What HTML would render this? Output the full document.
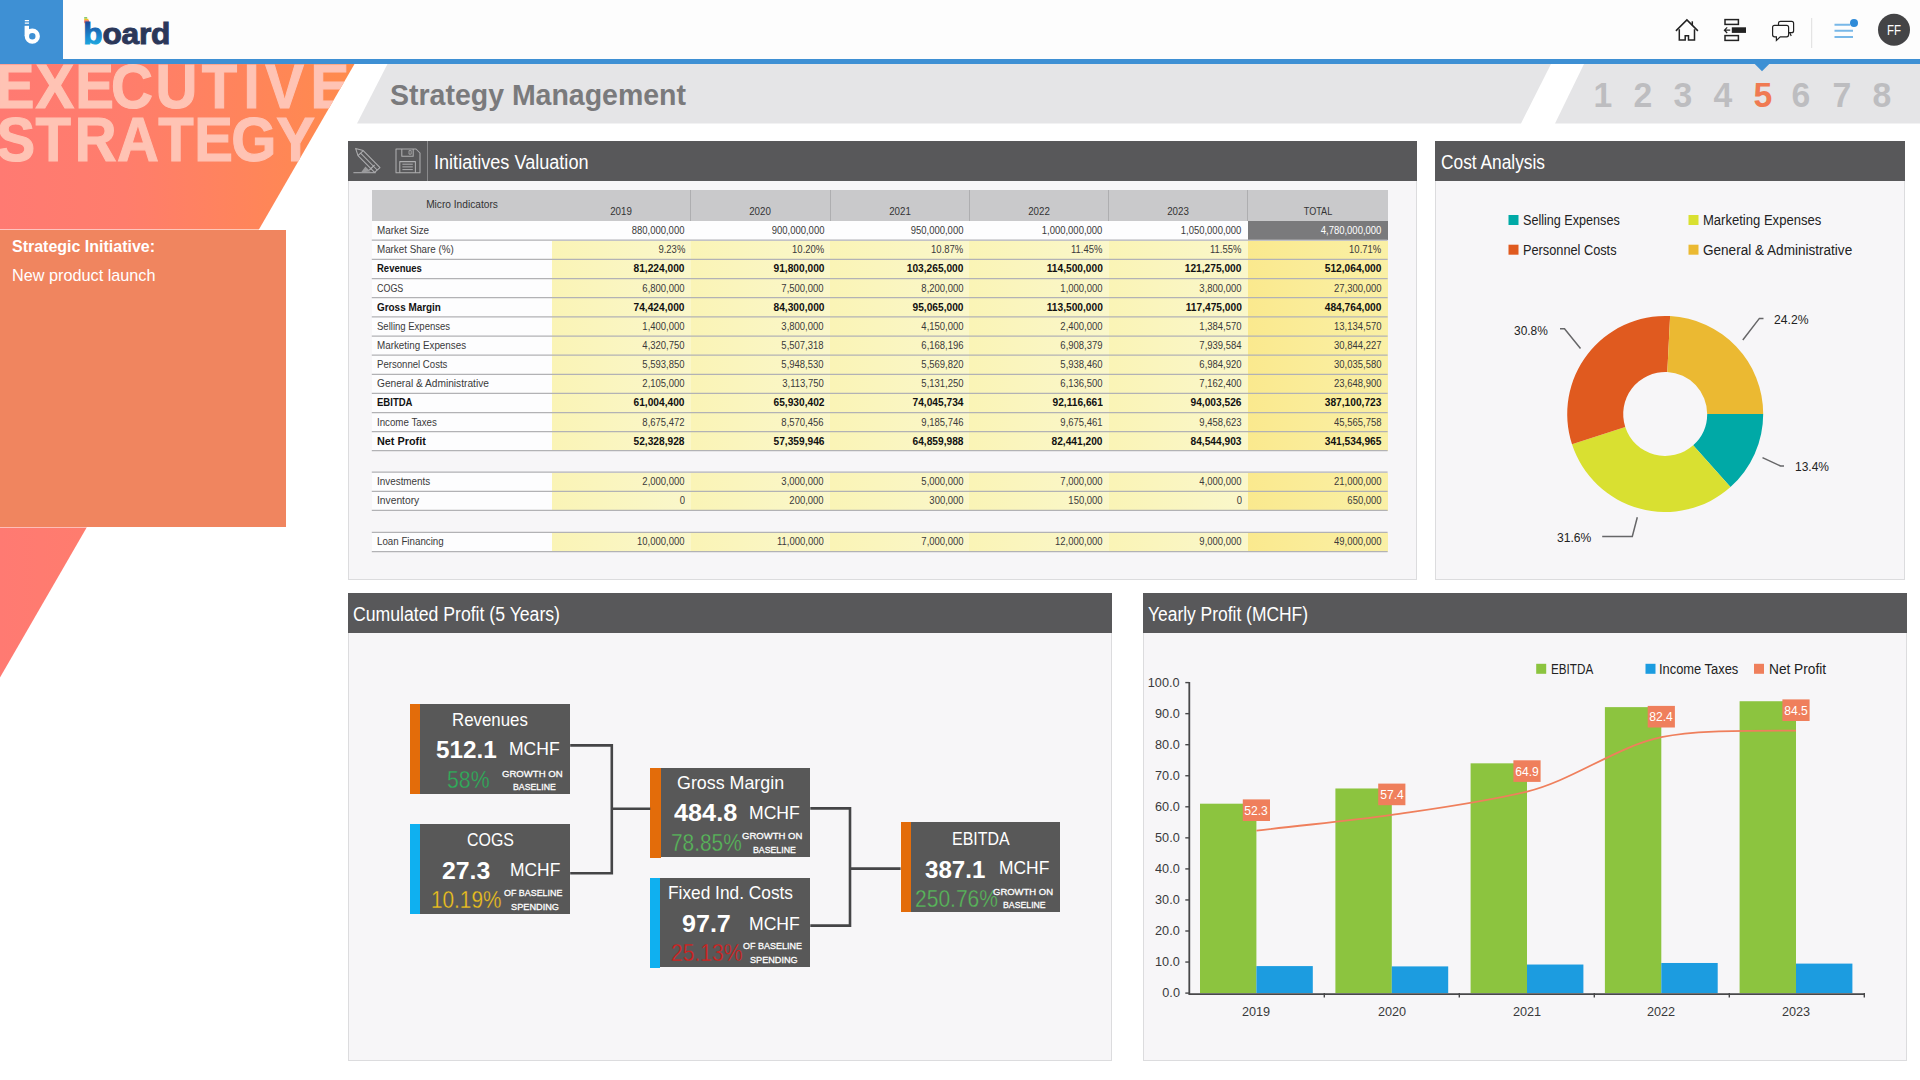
<!DOCTYPE html>
<html lang="en"><head><meta charset="utf-8"><title>Board - Strategy Management</title>
<style>
html,body{margin:0;padding:0;}
body{width:1920px;height:1080px;overflow:hidden;background:#fff;font-family:"Liberation Sans", sans-serif;position:relative;}
.t{position:absolute;white-space:nowrap;line-height:1;display:block;}
svg{position:absolute;left:0;top:0;overflow:visible;}
svg text{font-family:"Liberation Sans", sans-serif;}
</style></head><body>
<svg width="1920" height="1080" viewBox="0 0 1920 1080">
<defs>
<linearGradient id="sg" x1="0" y1="0" x2="354" y2="0" gradientUnits="userSpaceOnUse">
<stop offset="0" stop-color="#ff7a72"/><stop offset="0.35" stop-color="#ff7d6c"/><stop offset="1" stop-color="#ff8b4c"/></linearGradient>
</defs>
<polygon points="0,60 354.5,60 354.5,64 0,677.5" fill="url(#sg)"/>
<polygon points="387.5,64 1551,64 1521,123.5 357,123.5" fill="#e5e5e7"/>
<polygon points="1584,64 1920,64 1920,123.5 1555,123.5" fill="#e5e5e7"/>
</svg>
<svg width="1920" height="1080" viewBox="0 0 1920 1080"><defs><clipPath id="sgc"><polygon points="0,60 354.5,60 354.5,64 0,677.5"/></clipPath></defs><g clip-path="url(#sgc)"><text transform="scale(0.92 1)" x="-4.69 38.47 81.88 120.75 169.04 219.41 264.82 288.36 337.48" y="107.85" font-size="63.1" font-weight="700" fill="#ffc3b4" stroke="#ffc3b4" stroke-width="1.1">EXECUTIVE</text>
<text transform="scale(0.92 1)" x="-3.71 38.54 81.19 127.26 172.13 211.07 251.28 300.18" y="160.85" font-size="63.1" font-weight="700" fill="#ffc3b4" stroke="#ffc3b4" stroke-width="1.1">STRATEGY</text></g></svg>
<div style="position:absolute;left:0px;top:229px;width:285.5px;height:1.2px;background:rgba(255,255,255,.55);"></div>
<div style="position:absolute;left:0px;top:230.2px;width:285.5px;height:297px;background:#f0855f;"></div>
<div style="position:absolute;left:0px;top:527.2px;width:285.5px;height:1.2px;background:rgba(255,255,255,.5);"></div>
<div style="position:absolute;left:0px;top:0px;width:1920px;height:59.5px;background:#fdfdfd;"></div>
<div style="position:absolute;left:0px;top:0px;width:62.5px;height:59.5px;background:#3e90d4;"></div>
<div style="position:absolute;left:0px;top:59px;width:1920px;height:5px;background:#3e90d4;"></div>
<svg width="1920" height="1080" viewBox="0 0 1920 1080">
<g fill="none" stroke="#fff">
<circle cx="32.3" cy="36.2" r="5.4" stroke-width="4.4"/>
<path d="M26.8 25.8V36" stroke-width="4.4"/>
<path d="M24.8 20.6h4.2M24.8 23.2h4.2" stroke-width="1.3"/>
</g>
<rect x="84.2" y="17.2" width="3" height="1.4" fill="#6cbf4b"/>
<rect x="84.2" y="18.8" width="4.2" height="1.4" fill="#f4c020"/>
<rect x="84.2" y="20.4" width="4.8" height="1.4" fill="#e8452c"/>
<rect x="84.2" y="22" width="4.8" height="1.2" fill="#f08a24"/>
<g fill="none" stroke="#222" stroke-width="1.5" stroke-linejoin="miter">
<path d="M1675.9 30.9L1686.9 19.9L1697.9 30.9"/>
<path d="M1679.3 29.2V40H1685.2V35.8H1688.5V40H1694.5V29.2"/>
<path d="M1692.3 21.3V25.2"/>
<rect x="1725" y="19.6" width="13.4" height="4.8"/>
<rect x="1725" y="35.6" width="13.4" height="4.8"/>
<path d="M1730.2 30.2H1724.6M1727.2 27.4L1724.4 30.2L1727.2 33" stroke-width="1.2"/>
<path d="M1778.5 25.2V23.3a2 2 0 0 1 2 -2H1791.6a2 2 0 0 1 2 2V30.7a2 2 0 0 1 -2 2H1789" stroke-width="1.2"/>
<path d="M1789.8 32.7l1.4 3.2" stroke-width="1.2"/>
<path d="M1774.6 25.3H1786.6a2 2 0 0 1 2 2V34.8a2 2 0 0 1 -2 2H1780.3L1776.4 40.4V36.8H1774.6a2 2 0 0 1 -2 -2V27.3a2 2 0 0 1 2 -2z" stroke-width="1.2"/>
</g>
<rect x="1731.8" y="27.3" width="14.2" height="5.6" fill="#222"/>
<rect x="1811.2" y="18" width="1" height="30" fill="#dedede"/>
<g stroke="#78b8e8" stroke-width="1.9"><path d="M1834.5 24.7H1850M1834.5 30.8H1853M1834.5 37H1853"/></g>
<circle cx="1854" cy="23" r="4" fill="#2f8bd8"/>
<circle cx="1894" cy="29.7" r="16" fill="#444446"/>
<polygon points="1754.5,63.8 1769.5,63.8 1762,71.2" fill="#3e90d4"/>
</svg>
<svg width="1920" height="1080" viewBox="0 0 1920 1080"><defs>
<linearGradient id="bgr" x1="0" y1="0" x2="0" y2="1"><stop offset="0.3" stop-color="#1d4f9e"/><stop offset="0.62" stop-color="#1b8fd4"/><stop offset="0.92" stop-color="#21bfe6"/></linearGradient>
<pattern id="bp" x="70" y="10" width="120" height="45" patternUnits="userSpaceOnUse"><rect x="0" y="0" width="25.6" height="45" fill="url(#bgr)"/><rect x="25.6" y="0" width="95" height="45" fill="#2b3759"/></pattern></defs>
<text transform="scale(1.07 1)" x="77.9" y="44.5" font-size="29.6" font-weight="700" letter-spacing="-0.2" fill="url(#bp)" stroke="url(#bp)" stroke-width="0.9">board</text></svg>
<div style="position:absolute;left:347.5px;top:180.5px;width:1069px;height:399.0px;background:#f7f6f8;box-sizing:border-box;border:1px solid #dcdcde;border-top:none;"></div>
<div style="position:absolute;left:347.5px;top:141px;width:1069px;height:39.5px;background:#58585a;"></div>
<div style="position:absolute;left:1435px;top:180.5px;width:470px;height:399.0px;background:#f7f6f8;box-sizing:border-box;border:1px solid #dcdcde;border-top:none;"></div>
<div style="position:absolute;left:1435px;top:141px;width:470px;height:39.5px;background:#58585a;"></div>
<div style="position:absolute;left:347.5px;top:632.5px;width:764.5px;height:428.0px;background:#f7f6f8;box-sizing:border-box;border:1px solid #dcdcde;border-top:none;"></div>
<div style="position:absolute;left:347.5px;top:593px;width:764.5px;height:39.5px;background:#58585a;"></div>
<div style="position:absolute;left:1142.5px;top:632.5px;width:764.5px;height:428.0px;background:#f7f6f8;box-sizing:border-box;border:1px solid #dcdcde;border-top:none;"></div>
<div style="position:absolute;left:1142.5px;top:593px;width:764.5px;height:39.5px;background:#58585a;"></div>
<div style="position:absolute;left:427.3px;top:141px;width:1px;height:39.5px;background:#8a8a8c;"></div>
<svg width="1920" height="1080" viewBox="0 0 1920 1080"><g fill="none" stroke="#aeaeb0" stroke-width="1.05" stroke-linejoin="round">
<path d="M355.6 148.4L363.2 150.6L380 167.6L374.6 172.4L358 155.6Z"/>
<path d="M358 155.6L363.2 150.6M360.6 153.2L377.2 170M374.6 165L369.4 170"/>
<path d="M353.4 172.7H375.8"/>
<path d="M361 172.4L365.4 166.4L370.6 171.6Z" fill="#9a9a9c" stroke="none"/>
<path d="M396 149H416L420 153V172.8H396Z"/>
<path d="M401.8 149V156.2H413.2V149"/>
<path d="M399.8 172.8V161.6H415.4V172.8"/>
<path d="M402.4 164.2H412.8M402.4 166.9H412.8M402.4 169.6H412.8" stroke-width="1"/>
<rect x="409" y="150.6" width="2.2" height="3.6" stroke-width="0.8"/>
</g></svg>
<div style="position:absolute;left:371.8px;top:190px;width:1015.8px;height:31.4px;background:#c9c9cb;"></div>
<div style="position:absolute;left:690.3px;top:190px;width:1px;height:31.4px;background:#aeaeb0;"></div>
<div style="position:absolute;left:829.5px;top:190px;width:1px;height:31.4px;background:#aeaeb0;"></div>
<div style="position:absolute;left:968.8px;top:190px;width:1px;height:31.4px;background:#aeaeb0;"></div>
<div style="position:absolute;left:1108.0px;top:190px;width:1px;height:31.4px;background:#aeaeb0;"></div>
<div style="position:absolute;left:1247.3px;top:190px;width:1px;height:31.4px;background:#aeaeb0;"></div>
<div style="position:absolute;left:371.8px;top:221.4px;width:180.2px;height:19.099999999999994px;background:#fdfdfe;"></div>
<div style="position:absolute;left:552px;top:221.4px;width:695.8px;height:19.099999999999994px;background:#fdfdfe;"></div>
<div style="position:absolute;left:1247.8px;top:221.4px;width:139.79999999999995px;height:19.099999999999994px;background:#7a7a7c;"></div>
<div style="position:absolute;left:371.8px;top:240.5px;width:180.2px;height:19.19999999999999px;background:#fdfdfe;"></div>
<div style="position:absolute;left:552px;top:240.5px;width:695.8px;height:19.19999999999999px;background:repeating-linear-gradient(90deg,#faf4b6 0,#faf7cb 139.16px);"></div>
<div style="position:absolute;left:1247.8px;top:240.5px;width:139.79999999999995px;height:19.19999999999999px;background:linear-gradient(90deg,#fae98e,#faf0a6);"></div>
<div style="position:absolute;left:371.8px;top:259.7px;width:180.2px;height:19.100000000000023px;background:#fdfdfe;"></div>
<div style="position:absolute;left:552px;top:259.7px;width:695.8px;height:19.100000000000023px;background:repeating-linear-gradient(90deg,#faf4b6 0,#faf7cb 139.16px);"></div>
<div style="position:absolute;left:1247.8px;top:259.7px;width:139.79999999999995px;height:19.100000000000023px;background:linear-gradient(90deg,#fae98e,#faf0a6);"></div>
<div style="position:absolute;left:371.8px;top:278.8px;width:180.2px;height:19.19999999999999px;background:#fdfdfe;"></div>
<div style="position:absolute;left:552px;top:278.8px;width:695.8px;height:19.19999999999999px;background:repeating-linear-gradient(90deg,#faf4b6 0,#faf7cb 139.16px);"></div>
<div style="position:absolute;left:1247.8px;top:278.8px;width:139.79999999999995px;height:19.19999999999999px;background:linear-gradient(90deg,#fae98e,#faf0a6);"></div>
<div style="position:absolute;left:371.8px;top:298.0px;width:180.2px;height:19.100000000000023px;background:#fdfdfe;"></div>
<div style="position:absolute;left:552px;top:298.0px;width:695.8px;height:19.100000000000023px;background:repeating-linear-gradient(90deg,#faf4b6 0,#faf7cb 139.16px);"></div>
<div style="position:absolute;left:1247.8px;top:298.0px;width:139.79999999999995px;height:19.100000000000023px;background:linear-gradient(90deg,#fae98e,#faf0a6);"></div>
<div style="position:absolute;left:371.8px;top:317.1px;width:180.2px;height:19.19999999999999px;background:#fdfdfe;"></div>
<div style="position:absolute;left:552px;top:317.1px;width:695.8px;height:19.19999999999999px;background:repeating-linear-gradient(90deg,#faf4b6 0,#faf7cb 139.16px);"></div>
<div style="position:absolute;left:1247.8px;top:317.1px;width:139.79999999999995px;height:19.19999999999999px;background:linear-gradient(90deg,#fae98e,#faf0a6);"></div>
<div style="position:absolute;left:371.8px;top:336.3px;width:180.2px;height:19.099999999999966px;background:#fdfdfe;"></div>
<div style="position:absolute;left:552px;top:336.3px;width:695.8px;height:19.099999999999966px;background:repeating-linear-gradient(90deg,#faf4b6 0,#faf7cb 139.16px);"></div>
<div style="position:absolute;left:1247.8px;top:336.3px;width:139.79999999999995px;height:19.099999999999966px;background:linear-gradient(90deg,#fae98e,#faf0a6);"></div>
<div style="position:absolute;left:371.8px;top:355.4px;width:180.2px;height:19.200000000000045px;background:#fdfdfe;"></div>
<div style="position:absolute;left:552px;top:355.4px;width:695.8px;height:19.200000000000045px;background:repeating-linear-gradient(90deg,#faf4b6 0,#faf7cb 139.16px);"></div>
<div style="position:absolute;left:1247.8px;top:355.4px;width:139.79999999999995px;height:19.200000000000045px;background:linear-gradient(90deg,#fae98e,#faf0a6);"></div>
<div style="position:absolute;left:371.8px;top:374.6px;width:180.2px;height:19.099999999999966px;background:#fdfdfe;"></div>
<div style="position:absolute;left:552px;top:374.6px;width:695.8px;height:19.099999999999966px;background:repeating-linear-gradient(90deg,#faf4b6 0,#faf7cb 139.16px);"></div>
<div style="position:absolute;left:1247.8px;top:374.6px;width:139.79999999999995px;height:19.099999999999966px;background:linear-gradient(90deg,#fae98e,#faf0a6);"></div>
<div style="position:absolute;left:371.8px;top:393.7px;width:180.2px;height:19.19999999999999px;background:#fdfdfe;"></div>
<div style="position:absolute;left:552px;top:393.7px;width:695.8px;height:19.19999999999999px;background:repeating-linear-gradient(90deg,#faf4b6 0,#faf7cb 139.16px);"></div>
<div style="position:absolute;left:1247.8px;top:393.7px;width:139.79999999999995px;height:19.19999999999999px;background:linear-gradient(90deg,#fae98e,#faf0a6);"></div>
<div style="position:absolute;left:371.8px;top:412.9px;width:180.2px;height:19.100000000000023px;background:#fdfdfe;"></div>
<div style="position:absolute;left:552px;top:412.9px;width:695.8px;height:19.100000000000023px;background:repeating-linear-gradient(90deg,#faf4b6 0,#faf7cb 139.16px);"></div>
<div style="position:absolute;left:1247.8px;top:412.9px;width:139.79999999999995px;height:19.100000000000023px;background:linear-gradient(90deg,#fae98e,#faf0a6);"></div>
<div style="position:absolute;left:371.8px;top:432.0px;width:180.2px;height:18.80000000000001px;background:#fdfdfe;"></div>
<div style="position:absolute;left:552px;top:432.0px;width:695.8px;height:18.80000000000001px;background:repeating-linear-gradient(90deg,#faf4b6 0,#faf7cb 139.16px);"></div>
<div style="position:absolute;left:1247.8px;top:432.0px;width:139.79999999999995px;height:18.80000000000001px;background:linear-gradient(90deg,#fae98e,#faf0a6);"></div>
<div style="position:absolute;left:371.8px;top:472.5px;width:180.2px;height:19.100000000000023px;background:#fdfdfe;"></div>
<div style="position:absolute;left:552px;top:472.5px;width:695.8px;height:19.100000000000023px;background:repeating-linear-gradient(90deg,#faf4b6 0,#faf7cb 139.16px);"></div>
<div style="position:absolute;left:1247.8px;top:472.5px;width:139.79999999999995px;height:19.100000000000023px;background:linear-gradient(90deg,#fae98e,#faf0a6);"></div>
<div style="position:absolute;left:371.8px;top:491.6px;width:180.2px;height:19.099999999999966px;background:#fdfdfe;"></div>
<div style="position:absolute;left:552px;top:491.6px;width:695.8px;height:19.099999999999966px;background:repeating-linear-gradient(90deg,#faf4b6 0,#faf7cb 139.16px);"></div>
<div style="position:absolute;left:1247.8px;top:491.6px;width:139.79999999999995px;height:19.099999999999966px;background:linear-gradient(90deg,#fae98e,#faf0a6);"></div>
<div style="position:absolute;left:371.8px;top:532.6px;width:180.2px;height:19.399999999999977px;background:#fdfdfe;"></div>
<div style="position:absolute;left:552px;top:532.6px;width:695.8px;height:19.399999999999977px;background:repeating-linear-gradient(90deg,#faf4b6 0,#faf7cb 139.16px);"></div>
<div style="position:absolute;left:1247.8px;top:532.6px;width:139.79999999999995px;height:19.399999999999977px;background:linear-gradient(90deg,#fae98e,#faf0a6);"></div>
<svg width="1920" height="1080" viewBox="0 0 1920 1080"><path d="M371.8 240.20H1387.6M371.8 259.40H1387.6M371.8 278.50H1387.6M371.8 297.70H1387.6M371.8 316.80H1387.6M371.8 336.00H1387.6M371.8 355.10H1387.6M371.8 374.30H1387.6M371.8 393.40H1387.6M371.8 412.60H1387.6M371.8 431.70H1387.6M371.8 450.50H1387.6M371.8 472.20H1387.6M371.8 491.30H1387.6M371.8 510.40H1387.6M371.8 532.30H1387.6M371.8 551.70H1387.6" stroke="#b2b2b5" stroke-width="1.25" fill="none"/></svg>
<svg width="1920" height="1080" viewBox="0 0 1920 1080"><path d="M1763.20 414.00A98 98 0 0 1 1730.47 487.10L1693.17 445.33A42 42 0 0 0 1707.20 414.00Z" fill="#00a9a6"/><path d="M1730.47 487.10A98 98 0 0 1 1572.00 444.28L1625.26 426.98A42 42 0 0 0 1693.17 445.33Z" fill="#d9e031"/><path d="M1572.00 444.28A98 98 0 0 1 1670.12 316.12L1667.31 372.05A42 42 0 0 0 1625.26 426.98Z" fill="#e05a1f"/><path d="M1670.12 316.12A98 98 0 0 1 1763.20 414.00L1707.20 414.00A42 42 0 0 0 1667.31 372.05Z" fill="#ebb932"/><g fill="none" stroke="#666668" stroke-width="1.5"><path d="M1742.8 340L1759.4 318.4H1763.5"/><path d="M1580.5 348.5L1564.5 328.8H1560"/><path d="M1762.5 457.6L1780.5 466H1784"/><path d="M1637.3 517.3L1632.3 536.4H1602.2"/></g><rect x="1508.5" y="215" width="10" height="10" fill="#00a9a6"/><rect x="1688.5" y="215" width="10" height="10" fill="#d9e031"/><rect x="1508.5" y="244.7" width="10" height="10" fill="#e05a1f"/><rect x="1688.5" y="244.7" width="10" height="10" fill="#ebb932"/></svg>
<div style="position:absolute;left:410.3px;top:704.2px;width:159.7px;height:89.5px;background:#585858;"></div>
<div style="position:absolute;left:410.3px;top:704.2px;width:10.2px;height:90.3px;background:#e36c0a;"></div>
<div style="position:absolute;left:410.2px;top:824px;width:159.7px;height:89.5px;background:#585858;"></div>
<div style="position:absolute;left:410.2px;top:824px;width:10.2px;height:90.3px;background:#0fb0f0;"></div>
<div style="position:absolute;left:650.4px;top:767.6px;width:159.7px;height:89.5px;background:#585858;"></div>
<div style="position:absolute;left:650.4px;top:767.6px;width:10.2px;height:90.3px;background:#e36c0a;"></div>
<div style="position:absolute;left:650.3px;top:877.6px;width:159.7px;height:89.5px;background:#585858;"></div>
<div style="position:absolute;left:650.3px;top:877.6px;width:10.2px;height:90.3px;background:#0fb0f0;"></div>
<div style="position:absolute;left:900.7px;top:822px;width:159.7px;height:89.5px;background:#585858;"></div>
<div style="position:absolute;left:900.7px;top:822px;width:10.2px;height:90.3px;background:#e36c0a;"></div>
<svg width="1920" height="1080" viewBox="0 0 1920 1080"><g fill="none" stroke="#454547" stroke-width="2.6">
<path d="M570.2 745.4H611.8V873.2H570.2M611.8 808.7H650.3"/>
<path d="M810.3 808.4H850V925.6H810.3M850 868.6H900.6"/>
</g></svg>
<svg width="1920" height="1080" viewBox="0 0 1920 1080"><rect x="1200.0" y="803.70" width="56.4" height="189.41" fill="#8cc43f"/><rect x="1256.4" y="966.09" width="56.4" height="27.01" fill="#1c9ce0"/><rect x="1335.4" y="788.48" width="56.4" height="204.62" fill="#8cc43f"/><rect x="1391.8" y="966.40" width="56.4" height="26.70" fill="#1c9ce0"/><rect x="1470.6" y="763.33" width="56.4" height="229.77" fill="#8cc43f"/><rect x="1527.0" y="964.53" width="56.4" height="28.57" fill="#1c9ce0"/><rect x="1604.9" y="707.13" width="56.4" height="285.97" fill="#8cc43f"/><rect x="1661.3" y="962.98" width="56.4" height="30.12" fill="#1c9ce0"/><rect x="1739.6" y="701.23" width="56.4" height="291.87" fill="#8cc43f"/><rect x="1796.0" y="963.60" width="56.4" height="29.50" fill="#1c9ce0"/><g stroke="#48484a" stroke-width="1.8" fill="none"><path d="M1189.3 682.1V994.1H1864.8"/><path d="M1185.3 993.10H1189.3" stroke-width="1.4"/><path d="M1185.3 962.05H1189.3" stroke-width="1.4"/><path d="M1185.3 931.00H1189.3" stroke-width="1.4"/><path d="M1185.3 899.95H1189.3" stroke-width="1.4"/><path d="M1185.3 868.90H1189.3" stroke-width="1.4"/><path d="M1185.3 837.85H1189.3" stroke-width="1.4"/><path d="M1185.3 806.80H1189.3" stroke-width="1.4"/><path d="M1185.3 775.75H1189.3" stroke-width="1.4"/><path d="M1185.3 744.70H1189.3" stroke-width="1.4"/><path d="M1185.3 713.65H1189.3" stroke-width="1.4"/><path d="M1185.3 682.60H1189.3" stroke-width="1.4"/><path d="M1324.3 993.1V997.6" stroke-width="1.4"/><path d="M1459.3 993.1V997.6" stroke-width="1.4"/><path d="M1594.3 993.1V997.6" stroke-width="1.4"/><path d="M1729.3 993.1V997.6" stroke-width="1.4"/><path d="M1864.3 993.1V997.6" stroke-width="1.4"/></g><path d="M1256.4 830.7C1301.4 825.1 1346.8 821.4 1391.8 814.9C1436.8 808.3 1482.0 802.4 1527.0 791.6C1572.0 780.8 1616.3 746.7 1661.3 737.2C1691.3 730.9 1726.0 730.7 1796.0 730.7" fill="none" stroke="#ef7f5c" stroke-width="1.8"/><rect x="1242.8" y="799.4" width="27.2" height="21.6" fill="#ef7f5c"/><rect x="1378.2" y="783.6" width="27.2" height="21.6" fill="#ef7f5c"/><rect x="1513.4" y="760.3" width="27.2" height="21.6" fill="#ef7f5c"/><rect x="1647.7" y="705.9" width="27.2" height="21.6" fill="#ef7f5c"/><rect x="1782.4" y="699.4" width="27.2" height="21.6" fill="#ef7f5c"/><rect x="1536.2" y="663.8" width="10" height="10" fill="#8cc43f"/><rect x="1645.5" y="663.8" width="10" height="10" fill="#1c9ce0"/><rect x="1754" y="663.8" width="10" height="10" fill="#ef7f5c"/></svg>
<span class="t " id="t0" style="top:237.86px;font-size:16.4px;color:#fff;font-weight:700;left:11.6px;transform-origin:0 0;transform:scaleX(0.9751);">Strategic Initiative:</span>
<span class="t " id="t1" style="top:266.76px;font-size:16.4px;color:#fff;left:11.6px;transform-origin:0 0;transform:scaleX(0.9905);">New product launch</span>
<span class="t " id="t2" style="top:22.12px;font-size:15.5px;color:#fff;left:1894px;transform-origin:50% 0;transform:translateX(-50%) scaleX(0.7393);">FF</span>
<span class="t " id="t3" style="top:79.84px;font-size:29.6px;color:#7a7a7c;font-weight:700;left:389.5px;transform-origin:0 0;transform:scaleX(0.9625);">Strategy Management</span>
<span class="t " id="t4" style="top:78.03px;font-size:35.5px;color:#bdbdc0;font-weight:700;left:1603px;transform-origin:50% 0;transform:translateX(-50%) scaleX(0.9500);">1</span>
<span class="t " id="t5" style="top:78.03px;font-size:35.5px;color:#bdbdc0;font-weight:700;left:1643.4px;transform-origin:50% 0;transform:translateX(-50%) scaleX(0.9500);">2</span>
<span class="t " id="t6" style="top:78.03px;font-size:35.5px;color:#bdbdc0;font-weight:700;left:1682.5px;transform-origin:50% 0;transform:translateX(-50%) scaleX(0.9500);">3</span>
<span class="t " id="t7" style="top:78.03px;font-size:35.5px;color:#bdbdc0;font-weight:700;left:1723px;transform-origin:50% 0;transform:translateX(-50%) scaleX(0.9500);">4</span>
<span class="t " id="t8" style="top:78.03px;font-size:35.5px;color:#f07a52;font-weight:700;left:1762.5px;transform-origin:50% 0;transform:translateX(-50%) scaleX(0.9500);">5</span>
<span class="t " id="t9" style="top:78.03px;font-size:35.5px;color:#bdbdc0;font-weight:700;left:1801px;transform-origin:50% 0;transform:translateX(-50%) scaleX(0.9500);">6</span>
<span class="t " id="t10" style="top:78.03px;font-size:35.5px;color:#bdbdc0;font-weight:700;left:1841.5px;transform-origin:50% 0;transform:translateX(-50%) scaleX(0.9500);">7</span>
<span class="t " id="t11" style="top:78.03px;font-size:35.5px;color:#bdbdc0;font-weight:700;left:1881.7px;transform-origin:50% 0;transform:translateX(-50%) scaleX(0.9500);">8</span>
<span class="t " id="t12" style="top:152.53px;font-size:19.5px;color:#fff;left:433.5px;transform-origin:0 0;transform:scaleX(0.9275);">Initiatives Valuation</span>
<span class="t " id="t13" style="top:152.53px;font-size:19.5px;color:#fff;left:1440.5px;transform-origin:0 0;transform:scaleX(0.8884);">Cost Analysis</span>
<span class="t " id="t14" style="top:604.62px;font-size:19.5px;color:#fff;left:352.6px;transform-origin:0 0;transform:scaleX(0.9051);">Cumulated Profit (5 Years)</span>
<span class="t " id="t15" style="top:604.62px;font-size:19.5px;color:#fff;left:1148px;transform-origin:0 0;transform:scaleX(0.8932);">Yearly Profit (MCHF)</span>
<span class="t " id="t16" style="top:199.31px;font-size:10.7px;color:#333;left:461.8px;transform-origin:50% 0;transform:translateX(-50%) scaleX(0.9505);">Micro Indicators</span>
<span class="t " id="t17" style="top:206.21px;font-size:10.7px;color:#333;left:621.4px;transform-origin:50% 0;transform:translateX(-50%) scaleX(0.9100);">2019</span>
<span class="t " id="t18" style="top:206.21px;font-size:10.7px;color:#333;left:760.4px;transform-origin:50% 0;transform:translateX(-50%) scaleX(0.9100);">2020</span>
<span class="t " id="t19" style="top:206.21px;font-size:10.7px;color:#333;left:899.65px;transform-origin:50% 0;transform:translateX(-50%) scaleX(0.9100);">2021</span>
<span class="t " id="t20" style="top:206.21px;font-size:10.7px;color:#333;left:1038.9px;transform-origin:50% 0;transform:translateX(-50%) scaleX(0.9100);">2022</span>
<span class="t " id="t21" style="top:206.21px;font-size:10.7px;color:#333;left:1178.15px;transform-origin:50% 0;transform:translateX(-50%) scaleX(0.9100);">2023</span>
<span class="t " id="t22" style="top:206.21px;font-size:10.7px;color:#333;left:1317.6999999999998px;transform-origin:50% 0;transform:translateX(-50%) scaleX(0.8500);">TOTAL</span>
<span class="t " id="t23" style="top:225.05px;font-size:10.7px;color:#3a3a3a;left:376.6px;transform-origin:0 0;transform:scaleX(0.9231);">Market Size</span>
<span class="t " id="t24" style="top:225.05px;font-size:10.7px;color:#3a3a3a;right:1235.20px;transform-origin:100% 0;transform:scaleX(0.8870);">880,000,000</span>
<span class="t " id="t25" style="top:225.05px;font-size:10.7px;color:#3a3a3a;right:1096.00px;transform-origin:100% 0;transform:scaleX(0.8870);">900,000,000</span>
<span class="t " id="t26" style="top:225.05px;font-size:10.7px;color:#3a3a3a;right:956.70px;transform-origin:100% 0;transform:scaleX(0.8870);">950,000,000</span>
<span class="t " id="t27" style="top:225.05px;font-size:10.7px;color:#3a3a3a;right:817.50px;transform-origin:100% 0;transform:scaleX(0.8870);">1,000,000,000</span>
<span class="t " id="t28" style="top:225.05px;font-size:10.7px;color:#3a3a3a;right:678.20px;transform-origin:100% 0;transform:scaleX(0.8870);">1,050,000,000</span>
<span class="t " id="t29" style="top:225.05px;font-size:10.7px;color:#fff;right:538.40px;transform-origin:100% 0;transform:scaleX(0.8870);">4,780,000,000</span>
<span class="t " id="t30" style="top:244.20px;font-size:10.7px;color:#3a3a3a;left:376.6px;transform-origin:0 0;transform:scaleX(0.9158);">Market Share (%)</span>
<span class="t " id="t31" style="top:244.20px;font-size:10.7px;color:#3a3a3a;right:1235.20px;transform-origin:100% 0;transform:scaleX(0.8870);">9.23%</span>
<span class="t " id="t32" style="top:244.20px;font-size:10.7px;color:#3a3a3a;right:1096.00px;transform-origin:100% 0;transform:scaleX(0.8870);">10.20%</span>
<span class="t " id="t33" style="top:244.20px;font-size:10.7px;color:#3a3a3a;right:956.70px;transform-origin:100% 0;transform:scaleX(0.8870);">10.87%</span>
<span class="t " id="t34" style="top:244.20px;font-size:10.7px;color:#3a3a3a;right:817.50px;transform-origin:100% 0;transform:scaleX(0.8870);">11.45%</span>
<span class="t " id="t35" style="top:244.20px;font-size:10.7px;color:#3a3a3a;right:678.20px;transform-origin:100% 0;transform:scaleX(0.8870);">11.55%</span>
<span class="t " id="t36" style="top:244.20px;font-size:10.7px;color:#3a3a3a;right:538.40px;transform-origin:100% 0;transform:scaleX(0.8870);">10.71%</span>
<span class="t " id="t37" style="top:263.36px;font-size:10.7px;color:#111;font-weight:700;left:376.6px;transform-origin:0 0;transform:scaleX(0.8891);">Revenues</span>
<span class="t " id="t38" style="top:263.36px;font-size:10.7px;color:#111;font-weight:700;right:1235.20px;transform-origin:100% 0;transform:scaleX(0.9530);">81,224,000</span>
<span class="t " id="t39" style="top:263.36px;font-size:10.7px;color:#111;font-weight:700;right:1096.00px;transform-origin:100% 0;transform:scaleX(0.9530);">91,800,000</span>
<span class="t " id="t40" style="top:263.36px;font-size:10.7px;color:#111;font-weight:700;right:956.70px;transform-origin:100% 0;transform:scaleX(0.9530);">103,265,000</span>
<span class="t " id="t41" style="top:263.36px;font-size:10.7px;color:#111;font-weight:700;right:817.50px;transform-origin:100% 0;transform:scaleX(0.9530);">114,500,000</span>
<span class="t " id="t42" style="top:263.36px;font-size:10.7px;color:#111;font-weight:700;right:678.20px;transform-origin:100% 0;transform:scaleX(0.9530);">121,275,000</span>
<span class="t " id="t43" style="top:263.36px;font-size:10.7px;color:#111;font-weight:700;right:538.40px;transform-origin:100% 0;transform:scaleX(0.9530);">512,064,000</span>
<span class="t " id="t44" style="top:282.50px;font-size:10.7px;color:#3a3a3a;left:376.6px;transform-origin:0 0;transform:scaleX(0.8353);">COGS</span>
<span class="t " id="t45" style="top:282.50px;font-size:10.7px;color:#3a3a3a;right:1235.20px;transform-origin:100% 0;transform:scaleX(0.8870);">6,800,000</span>
<span class="t " id="t46" style="top:282.50px;font-size:10.7px;color:#3a3a3a;right:1096.00px;transform-origin:100% 0;transform:scaleX(0.8870);">7,500,000</span>
<span class="t " id="t47" style="top:282.50px;font-size:10.7px;color:#3a3a3a;right:956.70px;transform-origin:100% 0;transform:scaleX(0.8870);">8,200,000</span>
<span class="t " id="t48" style="top:282.50px;font-size:10.7px;color:#3a3a3a;right:817.50px;transform-origin:100% 0;transform:scaleX(0.8870);">1,000,000</span>
<span class="t " id="t49" style="top:282.50px;font-size:10.7px;color:#3a3a3a;right:678.20px;transform-origin:100% 0;transform:scaleX(0.8870);">3,800,000</span>
<span class="t " id="t50" style="top:282.50px;font-size:10.7px;color:#3a3a3a;right:538.40px;transform-origin:100% 0;transform:scaleX(0.8870);">27,300,000</span>
<span class="t " id="t51" style="top:301.65px;font-size:10.7px;color:#111;font-weight:700;left:376.6px;transform-origin:0 0;transform:scaleX(0.9276);">Gross Margin</span>
<span class="t " id="t52" style="top:301.65px;font-size:10.7px;color:#111;font-weight:700;right:1235.20px;transform-origin:100% 0;transform:scaleX(0.9530);">74,424,000</span>
<span class="t " id="t53" style="top:301.65px;font-size:10.7px;color:#111;font-weight:700;right:1096.00px;transform-origin:100% 0;transform:scaleX(0.9530);">84,300,000</span>
<span class="t " id="t54" style="top:301.65px;font-size:10.7px;color:#111;font-weight:700;right:956.70px;transform-origin:100% 0;transform:scaleX(0.9530);">95,065,000</span>
<span class="t " id="t55" style="top:301.65px;font-size:10.7px;color:#111;font-weight:700;right:817.50px;transform-origin:100% 0;transform:scaleX(0.9530);">113,500,000</span>
<span class="t " id="t56" style="top:301.65px;font-size:10.7px;color:#111;font-weight:700;right:678.20px;transform-origin:100% 0;transform:scaleX(0.9530);">117,475,000</span>
<span class="t " id="t57" style="top:301.65px;font-size:10.7px;color:#111;font-weight:700;right:538.40px;transform-origin:100% 0;transform:scaleX(0.9530);">484,764,000</span>
<span class="t " id="t58" style="top:320.81px;font-size:10.7px;color:#3a3a3a;left:376.6px;transform-origin:0 0;transform:scaleX(0.8915);">Selling Expenses</span>
<span class="t " id="t59" style="top:320.81px;font-size:10.7px;color:#3a3a3a;right:1235.20px;transform-origin:100% 0;transform:scaleX(0.8870);">1,400,000</span>
<span class="t " id="t60" style="top:320.81px;font-size:10.7px;color:#3a3a3a;right:1096.00px;transform-origin:100% 0;transform:scaleX(0.8870);">3,800,000</span>
<span class="t " id="t61" style="top:320.81px;font-size:10.7px;color:#3a3a3a;right:956.70px;transform-origin:100% 0;transform:scaleX(0.8870);">4,150,000</span>
<span class="t " id="t62" style="top:320.81px;font-size:10.7px;color:#3a3a3a;right:817.50px;transform-origin:100% 0;transform:scaleX(0.8870);">2,400,000</span>
<span class="t " id="t63" style="top:320.81px;font-size:10.7px;color:#3a3a3a;right:678.20px;transform-origin:100% 0;transform:scaleX(0.8870);">1,384,570</span>
<span class="t " id="t64" style="top:320.81px;font-size:10.7px;color:#3a3a3a;right:538.40px;transform-origin:100% 0;transform:scaleX(0.8870);">13,134,570</span>
<span class="t " id="t65" style="top:339.96px;font-size:10.7px;color:#3a3a3a;left:376.6px;transform-origin:0 0;transform:scaleX(0.9200);">Marketing Expenses</span>
<span class="t " id="t66" style="top:339.96px;font-size:10.7px;color:#3a3a3a;right:1235.20px;transform-origin:100% 0;transform:scaleX(0.8870);">4,320,750</span>
<span class="t " id="t67" style="top:339.96px;font-size:10.7px;color:#3a3a3a;right:1096.00px;transform-origin:100% 0;transform:scaleX(0.8870);">5,507,318</span>
<span class="t " id="t68" style="top:339.96px;font-size:10.7px;color:#3a3a3a;right:956.70px;transform-origin:100% 0;transform:scaleX(0.8870);">6,168,196</span>
<span class="t " id="t69" style="top:339.96px;font-size:10.7px;color:#3a3a3a;right:817.50px;transform-origin:100% 0;transform:scaleX(0.8870);">6,908,379</span>
<span class="t " id="t70" style="top:339.96px;font-size:10.7px;color:#3a3a3a;right:678.20px;transform-origin:100% 0;transform:scaleX(0.8870);">7,939,584</span>
<span class="t " id="t71" style="top:339.96px;font-size:10.7px;color:#3a3a3a;right:538.40px;transform-origin:100% 0;transform:scaleX(0.8870);">30,844,227</span>
<span class="t " id="t72" style="top:359.11px;font-size:10.7px;color:#3a3a3a;left:376.6px;transform-origin:0 0;transform:scaleX(0.8977);">Personnel Costs</span>
<span class="t " id="t73" style="top:359.11px;font-size:10.7px;color:#3a3a3a;right:1235.20px;transform-origin:100% 0;transform:scaleX(0.8870);">5,593,850</span>
<span class="t " id="t74" style="top:359.11px;font-size:10.7px;color:#3a3a3a;right:1096.00px;transform-origin:100% 0;transform:scaleX(0.8870);">5,948,530</span>
<span class="t " id="t75" style="top:359.11px;font-size:10.7px;color:#3a3a3a;right:956.70px;transform-origin:100% 0;transform:scaleX(0.8870);">5,569,820</span>
<span class="t " id="t76" style="top:359.11px;font-size:10.7px;color:#3a3a3a;right:817.50px;transform-origin:100% 0;transform:scaleX(0.8870);">5,938,460</span>
<span class="t " id="t77" style="top:359.11px;font-size:10.7px;color:#3a3a3a;right:678.20px;transform-origin:100% 0;transform:scaleX(0.8870);">6,984,920</span>
<span class="t " id="t78" style="top:359.11px;font-size:10.7px;color:#3a3a3a;right:538.40px;transform-origin:100% 0;transform:scaleX(0.8870);">30,035,580</span>
<span class="t " id="t79" style="top:378.25px;font-size:10.7px;color:#3a3a3a;left:376.6px;transform-origin:0 0;transform:scaleX(0.9513);">General &amp; Administrative</span>
<span class="t " id="t80" style="top:378.25px;font-size:10.7px;color:#3a3a3a;right:1235.20px;transform-origin:100% 0;transform:scaleX(0.8870);">2,105,000</span>
<span class="t " id="t81" style="top:378.25px;font-size:10.7px;color:#3a3a3a;right:1096.00px;transform-origin:100% 0;transform:scaleX(0.8870);">3,113,750</span>
<span class="t " id="t82" style="top:378.25px;font-size:10.7px;color:#3a3a3a;right:956.70px;transform-origin:100% 0;transform:scaleX(0.8870);">5,131,250</span>
<span class="t " id="t83" style="top:378.25px;font-size:10.7px;color:#3a3a3a;right:817.50px;transform-origin:100% 0;transform:scaleX(0.8870);">6,136,500</span>
<span class="t " id="t84" style="top:378.25px;font-size:10.7px;color:#3a3a3a;right:678.20px;transform-origin:100% 0;transform:scaleX(0.8870);">7,162,400</span>
<span class="t " id="t85" style="top:378.25px;font-size:10.7px;color:#3a3a3a;right:538.40px;transform-origin:100% 0;transform:scaleX(0.8870);">23,648,900</span>
<span class="t " id="t86" style="top:397.40px;font-size:10.7px;color:#111;font-weight:700;left:376.6px;transform-origin:0 0;transform:scaleX(0.8924);">EBITDA</span>
<span class="t " id="t87" style="top:397.40px;font-size:10.7px;color:#111;font-weight:700;right:1235.20px;transform-origin:100% 0;transform:scaleX(0.9530);">61,004,400</span>
<span class="t " id="t88" style="top:397.40px;font-size:10.7px;color:#111;font-weight:700;right:1096.00px;transform-origin:100% 0;transform:scaleX(0.9530);">65,930,402</span>
<span class="t " id="t89" style="top:397.40px;font-size:10.7px;color:#111;font-weight:700;right:956.70px;transform-origin:100% 0;transform:scaleX(0.9530);">74,045,734</span>
<span class="t " id="t90" style="top:397.40px;font-size:10.7px;color:#111;font-weight:700;right:817.50px;transform-origin:100% 0;transform:scaleX(0.9530);">92,116,661</span>
<span class="t " id="t91" style="top:397.40px;font-size:10.7px;color:#111;font-weight:700;right:678.20px;transform-origin:100% 0;transform:scaleX(0.9530);">94,003,526</span>
<span class="t " id="t92" style="top:397.40px;font-size:10.7px;color:#111;font-weight:700;right:538.40px;transform-origin:100% 0;transform:scaleX(0.9530);">387,100,723</span>
<span class="t " id="t93" style="top:416.55px;font-size:10.7px;color:#3a3a3a;left:376.6px;transform-origin:0 0;transform:scaleX(0.9095);">Income Taxes</span>
<span class="t " id="t94" style="top:416.55px;font-size:10.7px;color:#3a3a3a;right:1235.20px;transform-origin:100% 0;transform:scaleX(0.8870);">8,675,472</span>
<span class="t " id="t95" style="top:416.55px;font-size:10.7px;color:#3a3a3a;right:1096.00px;transform-origin:100% 0;transform:scaleX(0.8870);">8,570,456</span>
<span class="t " id="t96" style="top:416.55px;font-size:10.7px;color:#3a3a3a;right:956.70px;transform-origin:100% 0;transform:scaleX(0.8870);">9,185,746</span>
<span class="t " id="t97" style="top:416.55px;font-size:10.7px;color:#3a3a3a;right:817.50px;transform-origin:100% 0;transform:scaleX(0.8870);">9,675,461</span>
<span class="t " id="t98" style="top:416.55px;font-size:10.7px;color:#3a3a3a;right:678.20px;transform-origin:100% 0;transform:scaleX(0.8870);">9,458,623</span>
<span class="t " id="t99" style="top:416.55px;font-size:10.7px;color:#3a3a3a;right:538.40px;transform-origin:100% 0;transform:scaleX(0.8870);">45,565,758</span>
<span class="t " id="t100" style="top:435.50px;font-size:10.7px;color:#111;font-weight:700;left:376.6px;transform-origin:0 0;transform:scaleX(1.0147);">Net Profit</span>
<span class="t " id="t101" style="top:435.50px;font-size:10.7px;color:#111;font-weight:700;right:1235.20px;transform-origin:100% 0;transform:scaleX(0.9530);">52,328,928</span>
<span class="t " id="t102" style="top:435.50px;font-size:10.7px;color:#111;font-weight:700;right:1096.00px;transform-origin:100% 0;transform:scaleX(0.9530);">57,359,946</span>
<span class="t " id="t103" style="top:435.50px;font-size:10.7px;color:#111;font-weight:700;right:956.70px;transform-origin:100% 0;transform:scaleX(0.9530);">64,859,988</span>
<span class="t " id="t104" style="top:435.50px;font-size:10.7px;color:#111;font-weight:700;right:817.50px;transform-origin:100% 0;transform:scaleX(0.9530);">82,441,200</span>
<span class="t " id="t105" style="top:435.50px;font-size:10.7px;color:#111;font-weight:700;right:678.20px;transform-origin:100% 0;transform:scaleX(0.9530);">84,544,903</span>
<span class="t " id="t106" style="top:435.50px;font-size:10.7px;color:#111;font-weight:700;right:538.40px;transform-origin:100% 0;transform:scaleX(0.9530);">341,534,965</span>
<span class="t " id="t107" style="top:476.15px;font-size:10.7px;color:#3a3a3a;left:376.6px;transform-origin:0 0;transform:scaleX(0.9249);">Investments</span>
<span class="t " id="t108" style="top:476.15px;font-size:10.7px;color:#3a3a3a;right:1235.20px;transform-origin:100% 0;transform:scaleX(0.8870);">2,000,000</span>
<span class="t " id="t109" style="top:476.15px;font-size:10.7px;color:#3a3a3a;right:1096.00px;transform-origin:100% 0;transform:scaleX(0.8870);">3,000,000</span>
<span class="t " id="t110" style="top:476.15px;font-size:10.7px;color:#3a3a3a;right:956.70px;transform-origin:100% 0;transform:scaleX(0.8870);">5,000,000</span>
<span class="t " id="t111" style="top:476.15px;font-size:10.7px;color:#3a3a3a;right:817.50px;transform-origin:100% 0;transform:scaleX(0.8870);">7,000,000</span>
<span class="t " id="t112" style="top:476.15px;font-size:10.7px;color:#3a3a3a;right:678.20px;transform-origin:100% 0;transform:scaleX(0.8870);">4,000,000</span>
<span class="t " id="t113" style="top:476.15px;font-size:10.7px;color:#3a3a3a;right:538.40px;transform-origin:100% 0;transform:scaleX(0.8870);">21,000,000</span>
<span class="t " id="t114" style="top:495.25px;font-size:10.7px;color:#3a3a3a;left:376.6px;transform-origin:0 0;transform:scaleX(0.9598);">Inventory</span>
<span class="t " id="t115" style="top:495.25px;font-size:10.7px;color:#3a3a3a;right:1235.20px;transform-origin:100% 0;transform:scaleX(0.8870);">0</span>
<span class="t " id="t116" style="top:495.25px;font-size:10.7px;color:#3a3a3a;right:1096.00px;transform-origin:100% 0;transform:scaleX(0.8870);">200,000</span>
<span class="t " id="t117" style="top:495.25px;font-size:10.7px;color:#3a3a3a;right:956.70px;transform-origin:100% 0;transform:scaleX(0.8870);">300,000</span>
<span class="t " id="t118" style="top:495.25px;font-size:10.7px;color:#3a3a3a;right:817.50px;transform-origin:100% 0;transform:scaleX(0.8870);">150,000</span>
<span class="t " id="t119" style="top:495.25px;font-size:10.7px;color:#3a3a3a;right:678.20px;transform-origin:100% 0;transform:scaleX(0.8870);">0</span>
<span class="t " id="t120" style="top:495.25px;font-size:10.7px;color:#3a3a3a;right:538.40px;transform-origin:100% 0;transform:scaleX(0.8870);">650,000</span>
<span class="t " id="t121" style="top:536.40px;font-size:10.7px;color:#3a3a3a;left:376.6px;transform-origin:0 0;transform:scaleX(0.9125);">Loan Financing</span>
<span class="t " id="t122" style="top:536.40px;font-size:10.7px;color:#3a3a3a;right:1235.20px;transform-origin:100% 0;transform:scaleX(0.8870);">10,000,000</span>
<span class="t " id="t123" style="top:536.40px;font-size:10.7px;color:#3a3a3a;right:1096.00px;transform-origin:100% 0;transform:scaleX(0.8870);">11,000,000</span>
<span class="t " id="t124" style="top:536.40px;font-size:10.7px;color:#3a3a3a;right:956.70px;transform-origin:100% 0;transform:scaleX(0.8870);">7,000,000</span>
<span class="t " id="t125" style="top:536.40px;font-size:10.7px;color:#3a3a3a;right:817.50px;transform-origin:100% 0;transform:scaleX(0.8870);">12,000,000</span>
<span class="t " id="t126" style="top:536.40px;font-size:10.7px;color:#3a3a3a;right:678.20px;transform-origin:100% 0;transform:scaleX(0.8870);">9,000,000</span>
<span class="t " id="t127" style="top:536.40px;font-size:10.7px;color:#3a3a3a;right:538.40px;transform-origin:100% 0;transform:scaleX(0.8870);">49,000,000</span>
<span class="t " id="t128" style="top:213.40px;font-size:14px;color:#222;left:1522.9px;transform-origin:0 0;transform:scaleX(0.9003);">Selling Expenses</span>
<span class="t " id="t129" style="top:213.40px;font-size:14px;color:#222;left:1702.8px;transform-origin:0 0;transform:scaleX(0.9319);">Marketing Expenses</span>
<span class="t " id="t130" style="top:243.20px;font-size:14px;color:#222;left:1522.9px;transform-origin:0 0;transform:scaleX(0.9103);">Personnel Costs</span>
<span class="t " id="t131" style="top:243.20px;font-size:14px;color:#222;left:1702.8px;transform-origin:0 0;transform:scaleX(0.9683);">General &amp; Administrative</span>
<span class="t " id="t132" style="top:324.15px;font-size:13px;color:#222;left:1514.4px;transform-origin:0 0;transform:scaleX(0.9166);">30.8%</span>
<span class="t " id="t133" style="top:312.95px;font-size:13px;color:#222;left:1774.3px;transform-origin:0 0;transform:scaleX(0.9356);">24.2%</span>
<span class="t " id="t134" style="top:460.25px;font-size:13px;color:#222;left:1795.4px;transform-origin:0 0;transform:scaleX(0.9220);">13.4%</span>
<span class="t " id="t135" style="top:530.95px;font-size:13px;color:#222;left:1556.6px;transform-origin:0 0;transform:scaleX(0.9329);">31.6%</span>
<span class="t " id="t136" style="top:710.86px;font-size:18.4px;color:#fff;left:452.29999999999995px;transform-origin:0 0;transform:scaleX(0.9153);">Revenues</span>
<span class="t " id="t137" style="top:737.99px;font-size:24.6px;color:#fff;font-weight:700;left:435.9px;transform-origin:0 0;transform:scaleX(0.9879);">512.1</span>
<span class="t " id="t138" style="top:740.02px;font-size:18.1px;color:#fff;left:508.6px;transform-origin:0 0;transform:scaleX(0.9700);">MCHF</span>
<span class="t " id="t139" style="top:769.45px;font-size:23px;color:#2fae5a;-webkit-text-stroke:0.3px #585858;left:446.6px;transform-origin:0 0;transform:scaleX(0.9251);">58%</span>
<span class="t " id="t140" style="top:768.97px;font-size:9.8px;color:#fff;-webkit-text-stroke:0.3px #fff;left:501.90000000000003px;transform-origin:0 0;transform:scaleX(0.9767);">GROWTH ON</span>
<span class="t " id="t141" style="top:782.37px;font-size:9.8px;color:#fff;-webkit-text-stroke:0.3px #fff;left:512.5px;transform-origin:0 0;transform:scaleX(0.8931);">BASELINE</span>
<span class="t " id="t142" style="top:830.96px;font-size:18.4px;color:#fff;left:466.59999999999997px;transform-origin:0 0;transform:scaleX(0.8658);">COGS</span>
<span class="t " id="t143" style="top:858.79px;font-size:24.6px;color:#fff;font-weight:700;left:441.8px;transform-origin:0 0;transform:scaleX(1.0089);">27.3</span>
<span class="t " id="t144" style="top:860.91px;font-size:18.1px;color:#fff;left:509.8px;transform-origin:0 0;transform:scaleX(0.9624);">MCHF</span>
<span class="t " id="t145" style="top:889.35px;font-size:23px;color:#f0c21c;-webkit-text-stroke:0.3px #585858;left:431.4px;transform-origin:0 0;transform:scaleX(0.9024);">10.19%</span>
<span class="t " id="t146" style="top:888.37px;font-size:9.8px;color:#fff;-webkit-text-stroke:0.3px #fff;left:504.0px;transform-origin:0 0;transform:scaleX(0.9089);">OF BASELINE</span>
<span class="t " id="t147" style="top:901.97px;font-size:9.8px;color:#fff;-webkit-text-stroke:0.3px #fff;left:510.8px;transform-origin:0 0;transform:scaleX(0.9380);">SPENDING</span>
<span class="t " id="t148" style="top:774.46px;font-size:18.4px;color:#fff;left:676.6px;transform-origin:0 0;transform:scaleX(0.9703);">Gross Margin</span>
<span class="t " id="t149" style="top:800.79px;font-size:24.6px;color:#fff;font-weight:700;left:674.1px;transform-origin:0 0;transform:scaleX(1.0269);">484.8</span>
<span class="t " id="t150" style="top:803.72px;font-size:18.1px;color:#fff;left:748.8px;transform-origin:0 0;transform:scaleX(0.9720);">MCHF</span>
<span class="t " id="t151" style="top:831.65px;font-size:23px;color:#57b85a;-webkit-text-stroke:0.3px #585858;left:671.1px;transform-origin:0 0;transform:scaleX(0.9062);">78.85%</span>
<span class="t " id="t152" style="top:831.17px;font-size:9.8px;color:#fff;-webkit-text-stroke:0.3px #fff;left:742.0px;transform-origin:0 0;transform:scaleX(0.9735);">GROWTH ON</span>
<span class="t " id="t153" style="top:844.87px;font-size:9.8px;color:#fff;-webkit-text-stroke:0.3px #fff;left:752.9px;transform-origin:0 0;transform:scaleX(0.8931);">BASELINE</span>
<span class="t " id="t154" style="top:884.46px;font-size:18.4px;color:#fff;left:667.9px;transform-origin:0 0;transform:scaleX(0.9407);">Fixed Ind. Costs</span>
<span class="t " id="t155" style="top:912.09px;font-size:24.6px;color:#fff;font-weight:700;left:681.8px;transform-origin:0 0;transform:scaleX(1.0193);">97.7</span>
<span class="t " id="t156" style="top:914.51px;font-size:18.1px;color:#fff;left:748.8px;transform-origin:0 0;transform:scaleX(0.9720);">MCHF</span>
<span class="t " id="t157" style="top:941.95px;font-size:23px;color:#d3211f;-webkit-text-stroke:0.3px #585858;left:670.8px;transform-origin:0 0;transform:scaleX(0.9178);">25.13%</span>
<span class="t " id="t158" style="top:941.47px;font-size:9.8px;color:#fff;-webkit-text-stroke:0.3px #fff;left:743.0px;transform-origin:0 0;transform:scaleX(0.9167);">OF BASELINE</span>
<span class="t " id="t159" style="top:954.87px;font-size:9.8px;color:#fff;-webkit-text-stroke:0.3px #fff;left:750.1px;transform-origin:0 0;transform:scaleX(0.9322);">SPENDING</span>
<span class="t " id="t160" style="top:829.96px;font-size:18.4px;color:#fff;left:951.6999999999999px;transform-origin:0 0;transform:scaleX(0.8670);">EBITDA</span>
<span class="t " id="t161" style="top:857.79px;font-size:24.6px;color:#fff;font-weight:700;left:925.2px;transform-origin:0 0;transform:scaleX(0.9797);">387.1</span>
<span class="t " id="t162" style="top:859.22px;font-size:18.1px;color:#fff;left:999.3px;transform-origin:0 0;transform:scaleX(0.9624);">MCHF</span>
<span class="t " id="t163" style="top:887.65px;font-size:23px;color:#57b85a;-webkit-text-stroke:0.3px #585858;left:915px;transform-origin:0 0;transform:scaleX(0.9140);">250.76%</span>
<span class="t " id="t164" style="top:886.67px;font-size:9.8px;color:#fff;-webkit-text-stroke:0.3px #fff;left:992.5px;transform-origin:0 0;transform:scaleX(0.9686);">GROWTH ON</span>
<span class="t " id="t165" style="top:900.27px;font-size:9.8px;color:#fff;-webkit-text-stroke:0.3px #fff;left:1003.2px;transform-origin:0 0;transform:scaleX(0.8910);">BASELINE</span>
<span class="t " id="t166" style="top:803.86px;font-size:13px;color:#fff;left:1256.4px;transform-origin:50% 0;transform:translateX(-50%) scaleX(0.9323);">52.3</span>
<span class="t " id="t167" style="top:788.02px;font-size:13px;color:#fff;left:1391.8000000000002px;transform-origin:50% 0;transform:translateX(-50%) scaleX(0.9323);">57.4</span>
<span class="t " id="t168" style="top:764.74px;font-size:13px;color:#fff;left:1527.0px;transform-origin:50% 0;transform:translateX(-50%) scaleX(0.9323);">64.9</span>
<span class="t " id="t169" style="top:710.40px;font-size:13px;color:#fff;left:1661.3000000000002px;transform-origin:50% 0;transform:translateX(-50%) scaleX(0.9323);">82.4</span>
<span class="t " id="t170" style="top:703.88px;font-size:13px;color:#fff;left:1796.0px;transform-origin:50% 0;transform:translateX(-50%) scaleX(0.9323);">84.5</span>
<span class="t " id="t171" style="top:987.03px;font-size:12.2px;color:#3a3a3c;right:740.40px;transform-origin:100% 0;transform:scaleX(1.0400);">0.0</span>
<span class="t " id="t172" style="top:955.98px;font-size:12.2px;color:#3a3a3c;right:740.40px;transform-origin:100% 0;transform:scaleX(1.0400);">10.0</span>
<span class="t " id="t173" style="top:924.93px;font-size:12.2px;color:#3a3a3c;right:740.40px;transform-origin:100% 0;transform:scaleX(1.0400);">20.0</span>
<span class="t " id="t174" style="top:893.88px;font-size:12.2px;color:#3a3a3c;right:740.40px;transform-origin:100% 0;transform:scaleX(1.0400);">30.0</span>
<span class="t " id="t175" style="top:862.83px;font-size:12.2px;color:#3a3a3c;right:740.40px;transform-origin:100% 0;transform:scaleX(1.0400);">40.0</span>
<span class="t " id="t176" style="top:831.78px;font-size:12.2px;color:#3a3a3c;right:740.40px;transform-origin:100% 0;transform:scaleX(1.0400);">50.0</span>
<span class="t " id="t177" style="top:800.73px;font-size:12.2px;color:#3a3a3c;right:740.40px;transform-origin:100% 0;transform:scaleX(1.0400);">60.0</span>
<span class="t " id="t178" style="top:769.68px;font-size:12.2px;color:#3a3a3c;right:740.40px;transform-origin:100% 0;transform:scaleX(1.0400);">70.0</span>
<span class="t " id="t179" style="top:738.63px;font-size:12.2px;color:#3a3a3c;right:740.40px;transform-origin:100% 0;transform:scaleX(1.0400);">80.0</span>
<span class="t " id="t180" style="top:707.58px;font-size:12.2px;color:#3a3a3c;right:740.40px;transform-origin:100% 0;transform:scaleX(1.0400);">90.0</span>
<span class="t " id="t181" style="top:676.53px;font-size:12.2px;color:#3a3a3c;right:740.40px;transform-origin:100% 0;transform:scaleX(1.0400);">100.0</span>
<span class="t " id="t182" style="top:1005.93px;font-size:12.2px;color:#3a3a3c;left:1256.4px;transform-origin:50% 0;transform:translateX(-50%) scaleX(1.0400);">2019</span>
<span class="t " id="t183" style="top:1005.93px;font-size:12.2px;color:#3a3a3c;left:1391.8000000000002px;transform-origin:50% 0;transform:translateX(-50%) scaleX(1.0400);">2020</span>
<span class="t " id="t184" style="top:1005.93px;font-size:12.2px;color:#3a3a3c;left:1527.0px;transform-origin:50% 0;transform:translateX(-50%) scaleX(1.0400);">2021</span>
<span class="t " id="t185" style="top:1005.93px;font-size:12.2px;color:#3a3a3c;left:1661.3000000000002px;transform-origin:50% 0;transform:translateX(-50%) scaleX(1.0400);">2022</span>
<span class="t " id="t186" style="top:1005.93px;font-size:12.2px;color:#3a3a3c;left:1796.0px;transform-origin:50% 0;transform:translateX(-50%) scaleX(1.0400);">2023</span>
<span class="t " id="t187" style="top:662.20px;font-size:14px;color:#222;left:1550.7px;transform-origin:0 0;transform:scaleX(0.8344);">EBITDA</span>
<span class="t " id="t188" style="top:662.20px;font-size:14px;color:#222;left:1659.2px;transform-origin:0 0;transform:scaleX(0.9208);">Income Taxes</span>
<span class="t " id="t189" style="top:662.20px;font-size:14px;color:#222;left:1768.6px;transform-origin:0 0;transform:scaleX(0.9784);">Net Profit</span>
</body></html>
